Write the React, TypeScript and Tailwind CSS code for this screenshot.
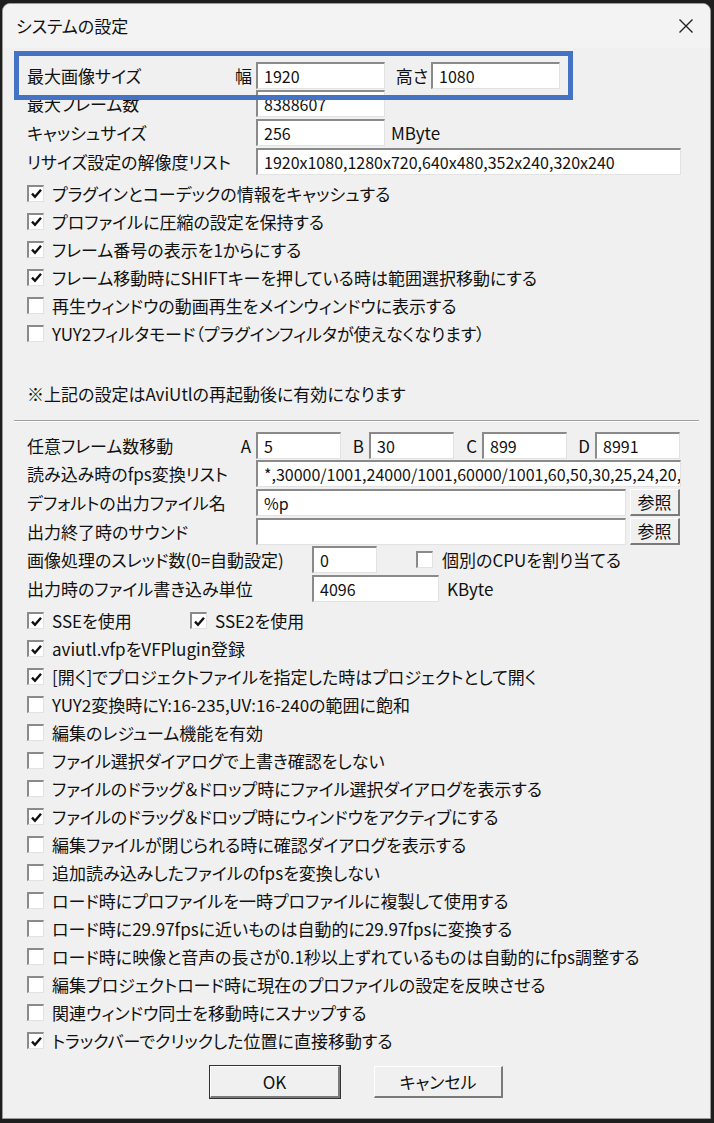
import React from "react";

const sunken =
  "bg-white border-t-2 border-l-2 border-t-[#8a8a8a] border-l-[#8a8a8a] border-r border-b border-r-[#e2e2e2] border-b-[#e2e2e2]";

function TextBox({ value = "", className = "" }: { value?: string; className?: string }) {
  return (
    <div
      className={`${sunken} h-[27px] pl-[6px] flex items-center text-[16px] leading-none overflow-hidden whitespace-nowrap shrink-0 ${className}`}
    >
      {value}
    </div>
  );
}

function Check({ checked }: { checked?: boolean }) {
  return (
    <span className={`${sunken} w-[17px] h-[17px] shrink-0 flex items-center justify-center`}>
      {checked && (
        <svg width="13" height="13" viewBox="0 0 13 13">
          <path d="M2 6.6 L5 9.8 L11 2.8" fill="none" stroke="#111" strokeWidth="2.4" />
        </svg>
      )}
    </span>
  );
}

function CheckRow({ label, checked }: { label: string; checked?: boolean }) {
  return (
    <div className="h-[28px] flex items-center gap-[8px]">
      <Check checked={checked} />
      <span>{label}</span>
    </div>
  );
}

function Raised({ children, className = "" }: { children: React.ReactNode; className?: string }) {
  return (
    <div
      className={`bg-[#f0f0f0] border-t border-l border-t-white border-l-white border-r-2 border-b-2 border-r-[#7a7a7a] border-b-[#7a7a7a] flex items-center justify-center shrink-0 ${className}`}
    >
      {children}
    </div>
  );
}

const topChecks = [
  { label: "プラグインとコーデックの情報をキャッシュする", checked: true },
  { label: "プロファイルに圧縮の設定を保持する", checked: true },
  { label: "フレーム番号の表示を1からにする", checked: true },
  { label: "フレーム移動時にSHIFTキーを押している時は範囲選択移動にする", checked: true },
  { label: "再生ウィンドウの動画再生をメインウィンドウに表示する" },
  { label: "YUY2フィルタモード（プラグインフィルタが使えなくなります）" },
];

const bottomChecks = [
  { label: "aviutl.vfpをVFPlugin登録", checked: true },
  { label: "[開く]でプロジェクトファイルを指定した時はプロジェクトとして開く", checked: true },
  { label: "YUY2変換時にY:16-235,UV:16-240の範囲に飽和" },
  { label: "編集のレジューム機能を有効" },
  { label: "ファイル選択ダイアログで上書き確認をしない" },
  { label: "ファイルのドラッグ＆ドロップ時にファイル選択ダイアログを表示する" },
  { label: "ファイルのドラッグ＆ドロップ時にウィンドウをアクティブにする", checked: true },
  { label: "編集ファイルが閉じられる時に確認ダイアログを表示する" },
  { label: "追加読み込みしたファイルのfpsを変換しない" },
  { label: "ロード時にプロファイルを一時プロファイルに複製して使用する" },
  { label: "ロード時に29.97fpsに近いものは自動的に29.97fpsに変換する" },
  { label: "ロード時に映像と音声の長さが0.1秒以上ずれているものは自動的にfps調整する" },
  { label: "編集プロジェクトロード時に現在のプロファイルの設定を反映させる" },
  { label: "関連ウィンドウ同士を移動時にスナップする" },
  { label: "トラックバーでクリックした位置に直接移動する", checked: true },
];

const frameJumps = [
  { key: "B", value: "30" },
  { key: "C", value: "899" },
  { key: "D", value: "8991" },
];

export default function App() {
  return (
    <div className="relative w-[714px] h-[1123px] bg-[#1e1e1e] pt-[3px] pl-[2px] pr-[3px] pb-[4px] font-['Noto_Sans_CJK_JP',sans-serif] text-[#111] [font-feature-settings:'palt']">
      <div className="h-full rounded-t-[8px] bg-[#f0f0f0] border border-[#9a9a9a] flex flex-col overflow-hidden">
        {/* title bar */}
        <div className="h-[44px] bg-[#f3f3f3] flex items-center justify-between pl-[13px] pr-[16px] shrink-0">
          <span className="text-[17px]">システムの設定</span>
          <svg width="16" height="16" viewBox="0 0 16 16">
            <path d="M1.5 1.5 L14.5 14.5 M14.5 1.5 L1.5 14.5" stroke="#222" strokeWidth="1.4" />
          </svg>
        </div>

        <div className="flex flex-col pl-[24px] pt-[13px] text-[17px] leading-none">
          <div className="h-[28px] flex items-center">
            <div className="w-[229px] flex justify-between pr-[4px] shrink-0">
              <span>最大画像サイズ</span>
              <span>幅</span>
            </div>
            <TextBox value="1920" className="w-[129px]" />
            <span className="w-[46px] text-right pr-[3px]">高さ</span>
            <TextBox value="1080" className="w-[129px]" />
          </div>
          <div className="h-[29px] flex items-center">
            <span className="w-[229px] shrink-0">最大フレーム数</span>
            <TextBox value="8388607" className="w-[129px]" />
          </div>
          <div className="h-[29px] flex items-center">
            <span className="w-[229px] shrink-0">キャッシュサイズ</span>
            <TextBox value="256" className="w-[129px]" />
            <span className="ml-[6px]">MByte</span>
          </div>
          <div className="h-[29px] flex items-center">
            <span className="w-[229px] shrink-0">リサイズ設定の解像度リスト</span>
            <TextBox value="1920x1080,1280x720,640x480,352x240,320x240" className="w-[425px]" />
          </div>

          <div className="mt-[3px] flex flex-col">
            {topChecks.map((c) => (
              <CheckRow key={c.label} label={c.label} checked={c.checked} />
            ))}
          </div>

          <div className="h-[28px] mt-[32px] flex items-center">
            ※上記の設定はAviUtlの再起動後に有効になります
          </div>
        </div>

        <div className="mx-[11px] mt-[13px] border-t border-t-[#a0a0a0] border-b border-b-white" />

        <div className="flex flex-col pl-[24px] pt-[9px] text-[17px] leading-none">
          <div className="h-[28.6px] flex items-center">
            <div className="w-[229px] flex justify-between pr-[5px] shrink-0">
              <span>任意フレーム数移動</span>
              <span>A</span>
            </div>
            <TextBox value="5" className="w-[85px]" />
            {frameJumps.map((f) => (
              <React.Fragment key={f.key}>
                <span className="w-[28px] text-right pr-[5px]">{f.key}</span>
                <TextBox value={f.value} className="w-[85px]" />
              </React.Fragment>
            ))}
          </div>
          <div className="h-[28.6px] flex items-center">
            <span className="w-[229px] shrink-0">読み込み時のfps変換リスト</span>
            <TextBox value="*,30000/1001,24000/1001,60000/1001,60,50,30,25,24,20,15,12,10,8,5,1" className="w-[425px]" />
          </div>
          <div className="h-[28.6px] flex items-center">
            <span className="w-[229px] shrink-0">デフォルトの出力ファイル名</span>
            <TextBox value="%p" className="w-[370px]" />
            <Raised className="ml-[4px] w-[50px] h-[27px]">参照</Raised>
          </div>
          <div className="h-[28.6px] flex items-center">
            <span className="w-[229px] shrink-0">出力終了時のサウンド</span>
            <TextBox className="w-[370px]" />
            <Raised className="ml-[4px] w-[50px] h-[27px]">参照</Raised>
          </div>
          <div className="h-[28.6px] flex items-center">
            <span className="w-[285px] shrink-0">画像処理のスレッド数(0=自動設定)</span>
            <TextBox value="0" className="w-[65px]" />
            <span className="ml-[39px] mr-[9px]">
              <Check />
            </span>
            <span>個別のCPUを割り当てる</span>
          </div>
          <div className="h-[28.6px] flex items-center">
            <span className="w-[285px] shrink-0">出力時のファイル書き込み単位</span>
            <TextBox value="4096" className="w-[127px]" />
            <span className="ml-[8px]">KByte</span>
          </div>

          <div className="mt-[4px] flex flex-col">
            <div className="h-[28px] flex items-center">
              <div className="w-[163px] flex items-center gap-[8px] shrink-0">
                <Check checked />
                <span>SSEを使用</span>
              </div>
              <div className="flex items-center gap-[8px]">
                <Check checked />
                <span>SSE2を使用</span>
              </div>
            </div>
            {bottomChecks.map((c) => (
              <CheckRow key={c.label} label={c.label} checked={c.checked} />
            ))}
          </div>

          <div className="mt-[11px] flex justify-center gap-[34px] pr-[24px]">
            <Raised className="w-[130px] h-[32px] outline outline-1 outline-[#333]">OK</Raised>
            <Raised className="w-[129px] h-[32px]">キャンセル</Raised>
          </div>
        </div>
      </div>

      {/* annotation box */}
      <div className="absolute left-[14px] top-[51px] w-[559px] h-[49px] border-[5px] border-[#4472c4] pointer-events-none" />
    </div>
  );
}
